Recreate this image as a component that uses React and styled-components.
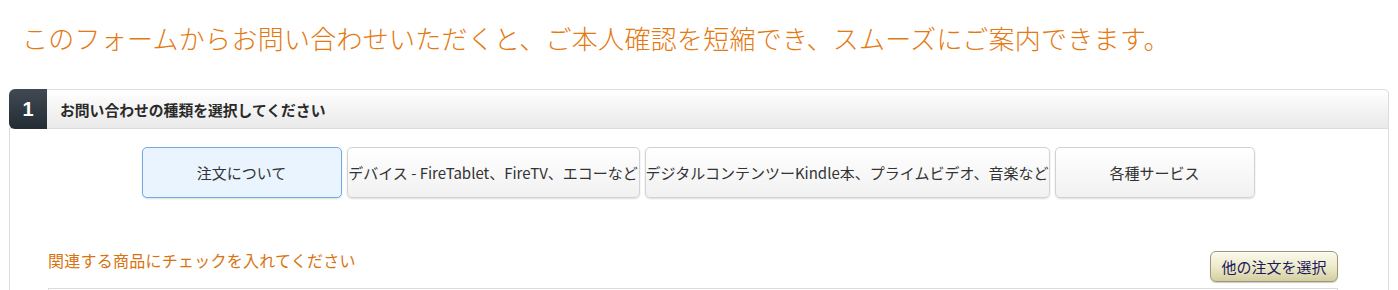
import React from "react";
import styled, { createGlobalStyle } from "styled-components";

const Global = createGlobalStyle`
  html, body { margin: 0; padding: 0; background: #fff; }
  body {
    font-family: "Noto Sans CJK JP", "Noto Sans", sans-serif;
    color: #333;
  }
`;

const Page = styled.div`
  padding: 0 9px;
`;

const Lead = styled.h1`
  margin: 0 0 34px;
  padding: 21px 0 0 13px;
  font-size: 26px;
  line-height: 34px;
  font-weight: 300;
  letter-spacing: 0.27px;
  color: #e47911;
  white-space: nowrap;
`;

const Section = styled.section`
  display: flex;
  flex-direction: column;
`;

const SectionHeader = styled.div`
  display: flex;
  align-items: stretch;
  height: 38px;
  border: 1px solid #dcdcdc;
  border-left: none;
  border-radius: 6px 5px 0 0;
  background: linear-gradient(#ffffff, #e9e9e9);
`;

const StepNumber = styled.div`
  width: 38px;
  margin: -1px 0;
  display: flex;
  align-items: center;
  justify-content: center;
  border-radius: 6px 0 0 6px;
  background: linear-gradient(#414a54, #232b33);
  color: #fff;
  font-family: "Liberation Sans", Arial, sans-serif;
  font-weight: 700;
  font-size: 20px;
`;

const StepTitle = styled.div`
  display: flex;
  align-items: center;
  padding-left: 13px;
  font-size: 14.8px;
  font-weight: 700;
  color: #2a2a2a;
  white-space: nowrap;
`;

const Body = styled.div`
  border-left: 1px solid #dddddd;
  border-right: 1px solid #dddddd;
  padding: 18px 50px 0 38px;
  display: flex;
  flex-direction: column;
`;

const Choices = styled.div`
  display: flex;
  justify-content: center;
  gap: 5px;
  margin-left: -40px;
  margin-right: -50px;
`;

const Choice = styled.button`
  box-sizing: border-box;
  width: ${(p) => p.$w}px;
  height: 51px;
  padding: 0;
  display: flex;
  align-items: center;
  justify-content: center;
  white-space: nowrap;
  font-family: inherit;
  font-size: 15px;
  color: #333;
  border-radius: 5px;
  cursor: pointer;
  border: 1px solid ${(p) => (p.$active ? "#72abe2" : "#d2d2d2")};
  background: ${(p) =>
    p.$active ? "#eaf4fe" : "linear-gradient(#ffffff, #f1f1f1)"};
  box-shadow: 0 1px 2px rgba(0, 0, 0, 0.14);
`;

const ProductsRow = styled.div`
  display: flex;
  justify-content: space-between;
  align-items: flex-start;
  margin-top: 53px;
`;

const ProductsLabel = styled.p`
  margin: 0;
  font-size: 16px;
  line-height: 18px;
  letter-spacing: 0.25px;
  color: #d9730f;
`;

const OtherOrderButton = styled.button`
  box-sizing: border-box;
  width: 128px;
  height: 31px;
  padding: 0;
  font-family: inherit;
  font-size: 15px;
  color: #1b1a5c;
  border: 1px solid #9d9774;
  border-radius: 6px;
  background: linear-gradient(#fbfaec, #ebe8c8 55%, #d4cea0);
  box-shadow: inset 0 1px 0 #fff, 0 1px 1px rgba(0, 0, 0, 0.2);
  cursor: pointer;
`;

const ProductTable = styled.div`
  margin-top: 6px;
  height: 2px;
  border: 1px solid #dcdcdc;
  border-bottom: none;
`;

const choices = [
  { label: "注文について", w: 200, active: true },
  { label: "デバイス - FireTablet、FireTV、エコーなど", w: 293 },
  { label: "デジタルコンテンツーKindle本、プライムビデオ、音楽など", w: 405 },
  { label: "各種サービス", w: 200 },
];

export default function App() {
  return (
    <Page>
      <Global />
      <Lead>
        このフォームからお問い合わせいただくと、ご本人確認を短縮でき、スムーズにご案内できます。
      </Lead>
      <Section>
        <SectionHeader>
          <StepNumber>1</StepNumber>
          <StepTitle>お問い合わせの種類を選択してください</StepTitle>
        </SectionHeader>
        <Body>
          <Choices>
            {choices.map((c) => (
              <Choice key={c.label} $w={c.w} $active={c.active}>
                {c.label}
              </Choice>
            ))}
          </Choices>
          <ProductsRow>
            <ProductsLabel>関連する商品にチェックを入れてください</ProductsLabel>
            <OtherOrderButton>他の注文を選択</OtherOrderButton>
          </ProductsRow>
          <ProductTable />
        </Body>
      </Section>
    </Page>
  );
}
